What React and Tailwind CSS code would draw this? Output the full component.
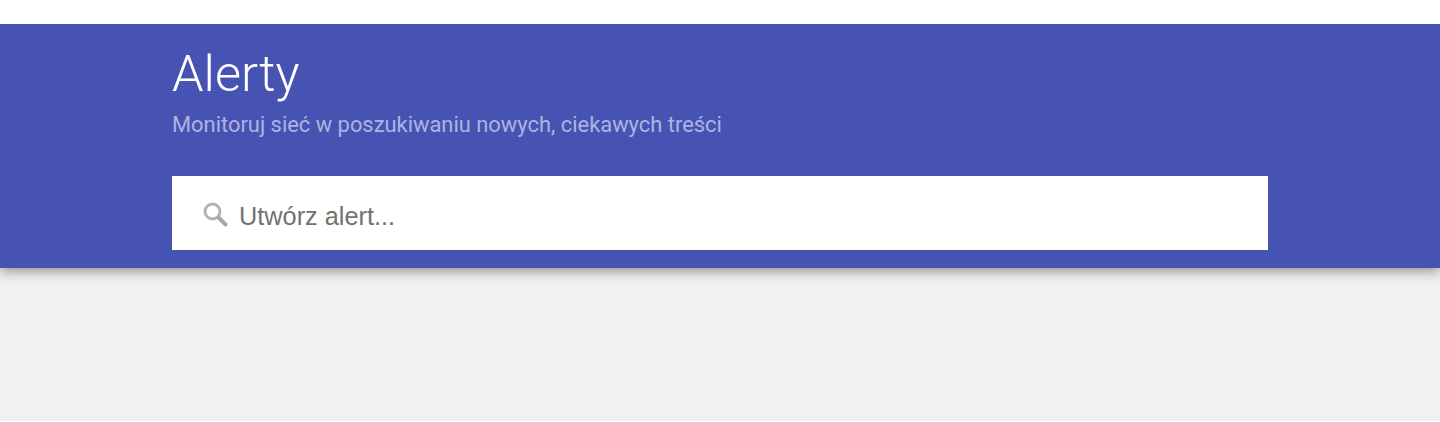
export default function App() {
  return (
    <div className="h-[422px] w-full overflow-hidden bg-white flex flex-col">
      <div className="h-6 shrink-0 bg-white relative z-10" />
      <div className="flex-1 bg-[#f1f1f1] mb-px">
        <header className="h-[244px] bg-[#4753b3] px-[172px] pt-[18px] shadow-[0_3px_12px_rgba(0,0,0,0.42)] relative">
          <h1 className="font-['Roboto',sans-serif] font-light text-[50.5px] leading-[64px] text-white">Alerty</h1>
          <p className="mt-[5px] font-['Roboto',sans-serif] text-[21.9px] leading-[28px] text-[#adb3e0]">Monitoruj sieć w poszukiwaniu nowych, ciekawych treści</p>
          <div className="mt-[37px] w-[1096px] h-[74px] bg-white flex items-center pl-[30px] gap-[11px]">
            <svg width="26" height="26" viewBox="0 0 26 26" fill="none" className="shrink-0 mt-[2px]">
              <circle cx="10.5" cy="10.5" r="7.5" stroke="#b4b4b4" strokeWidth="3" />
              <path d="M16.5 16.5 L23.5 23.5" stroke="#a8a8a8" strokeWidth="4" strokeLinecap="round" />
            </svg>
            <span className="font-['Liberation_Sans',Arial,sans-serif] text-[25.3px] leading-none text-[#717171] mt-[8px]">Utwórz alert...</span>
          </div>
        </header>
      </div>
    </div>
  );
}
